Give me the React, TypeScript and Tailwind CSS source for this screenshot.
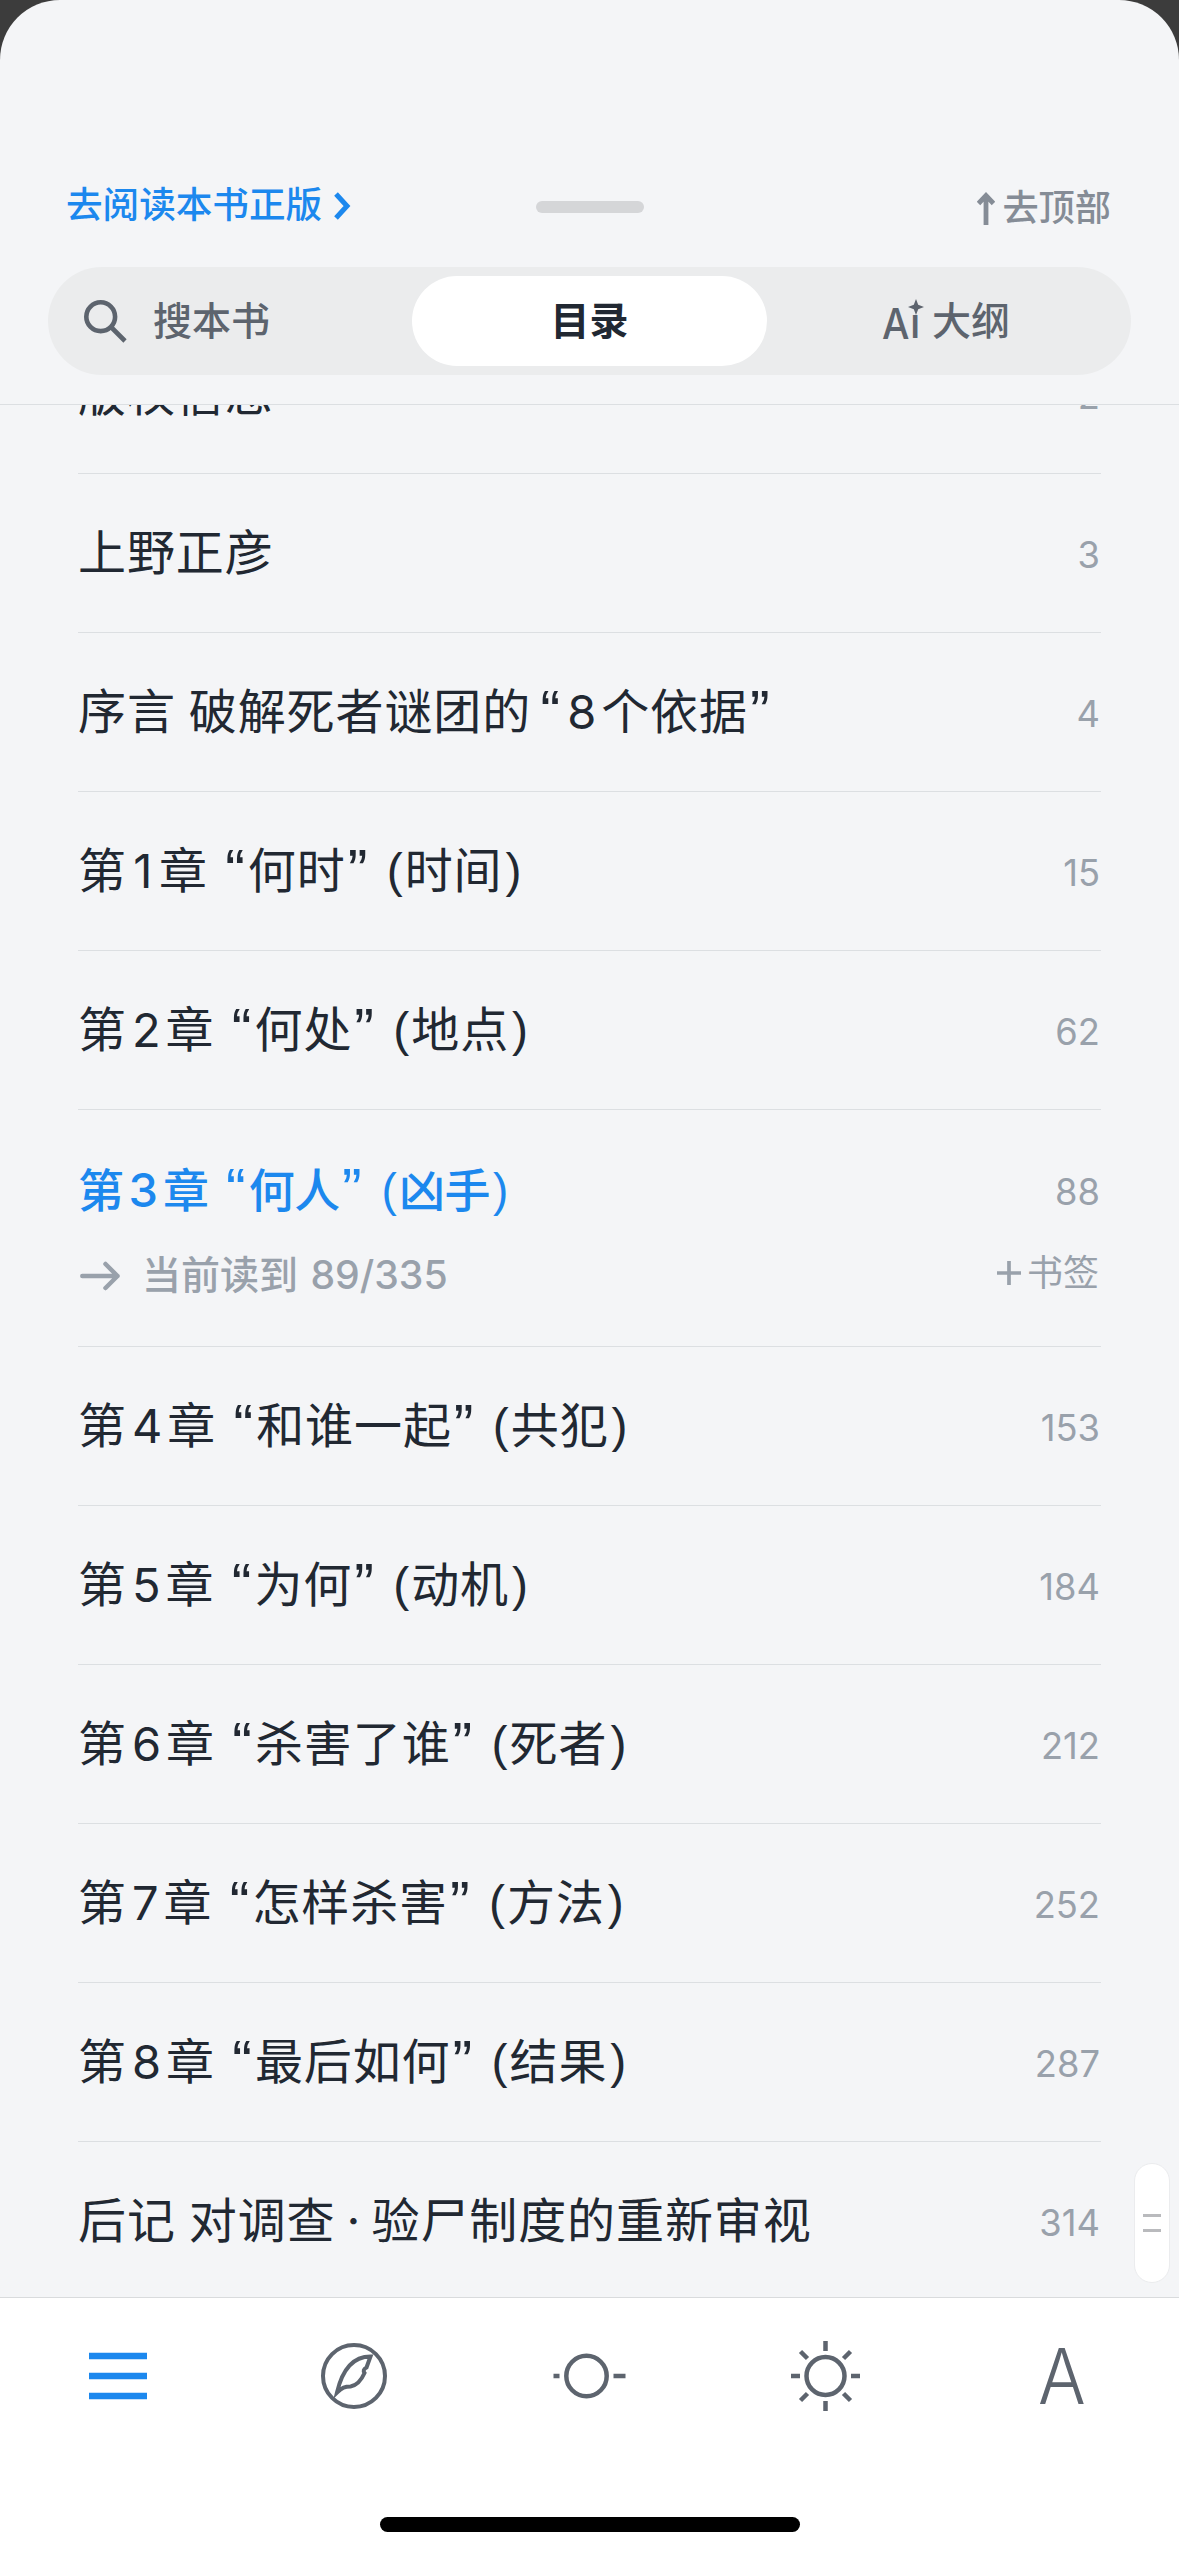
import clsx from 'clsx'

interface Chapter {
  title: string
  page: number
  current?: boolean
}

const chapters: Chapter[] = [
  { title: '版权信息', page: 2 },
  { title: '上野正彦', page: 3 },
  { title: '序言 破解死者谜团的“8个依据”', page: 4 },
  { title: '第1章 “何时”(时间)', page: 15 },
  { title: '第2章 “何处”(地点)', page: 62 },
  { title: '第3章 “何人”(凶手)', page: 88, current: true },
  { title: '第4章 “和谁一起”(共犯)', page: 153 },
  { title: '第5章 “为何”(动机)', page: 184 },
  { title: '第6章 “杀害了谁”(死者)', page: 212 },
  { title: '第7章 “怎样杀害”(方法)', page: 252 },
  { title: '第8章 “最后如何”(结果)', page: 287 },
  { title: '后记 对调查·验尸制度的重新审视', page: 314 },
]

const tokenClasses: Record<string, string> = {
  ' ': 'w-[13px]',
  ' “': "w-[40px] pr-[3px] text-right text-[59px] font-['Liberation_Sans']",
  '“': "w-[31px] pr-[2px] text-right text-[59px] font-['Liberation_Sans']",
  '”': "w-[25px] pl-[2px] text-[59px] font-['Liberation_Sans']",
  '(': "w-[34px] pr-[2px] text-right font-['Liberation_Sans']",
  ')': "w-[22px] pl-[3px] font-['Liberation_Sans']",
  '·': 'w-[36px] text-center',
}

function Title({ text, current }: { text: string; current?: boolean }) {
  const tokens = text.match(/\d+| ?“|[”() ·]|[^\d“”() ·]+/g) ?? []

  return (
    <h2
      className={clsx(
        'flex h-[60px] items-center whitespace-pre leading-[60px]',
        current
          ? 'text-[46px] font-medium tracking-[-0.4px] text-[#1c88ee]'
          : 'text-[48px] tracking-[0.9px] text-[#212832]'
      )}
    >
      {tokens.map((token, i) => {
        if (/\d/.test(token)) {
          return (
            <span key={i} className="min-w-[32px] px-[5px] text-center text-[47px] tracking-normal">
              {token}
            </span>
          )
        }
        return (
          <span
            key={i}
            className={clsx('block h-[60px] shrink-0', tokenClasses[token] && 'tracking-normal', tokenClasses[token])}
          >
            {token}
          </span>
        )
      })}
    </h2>
  )
}

function ChapterRow({ chapter }: { chapter: Chapter }) {
  return (
    <li
      className={clsx(
        'border-b border-[#dcdfe2]',
        chapter.current ? 'h-[237px] pt-[50px]' : 'h-[159px] pt-[49px]'
      )}
    >
      <div className="flex h-[60px] items-center justify-between">
        <Title text={chapter.title} current={chapter.current} />
        <span
          className={clsx(
            'pr-[1px] text-[36.3px] leading-[55px] text-[#99a1ab]',
            chapter.current ? 'pt-[4px]' : 'pt-[5px]'
          )}
        >
          {chapter.page}
        </span>
      </div>
      {chapter.current && (
        <div className="mt-[26px] flex h-[54px] items-center justify-between text-[#99a1ab]">
          <div className="flex items-center pt-[5px]">
            <svg className="ml-[2px] mr-[22px] h-[32px] w-[40px]" viewBox="0 0 40 32" fill="none" stroke="currentColor" strokeWidth="4.5" strokeLinecap="round" strokeLinejoin="round">
              <path d="M2.3 16H37.5M25.5 4l12 12-12 12" />
            </svg>
            <span className="text-[39px] font-medium">
              当前读到 <span className="pl-[2px] text-[39.2px]">89/335</span>
            </span>
          </div>
          <div className="flex items-center gap-[6px] pr-[2px]">
            <svg className="h-6 w-6" viewBox="0 0 24 24" stroke="currentColor" strokeWidth="3.7">
              <path d="M12 0v24M0 12h24" />
            </svg>
            <span className="text-[36px]">书签</span>
          </div>
        </div>
      )}
    </li>
  )
}

function Header() {
  return (
    <header className="flex h-[405px] shrink-0 flex-col border-b border-[#dcdfe2] px-[48px]">
      <div className="mt-[179px] grid h-[56px] grid-cols-[1fr_108px_1fr] items-center px-[18px]">
        <a className="-mt-[3px] flex items-center text-[36.6px] font-medium text-[#1c88ee]">
          去阅读本书正版
          <svg className="ml-[11px] h-[28px] w-[18px]" viewBox="0 0 18 28" fill="none" stroke="currentColor" strokeWidth="5">
            <path d="M3 2l11 12L3 26" />
          </svg>
        </a>
        <div className="h-[12px] rounded-full bg-[#d5d6d8]" />
        <a className="mt-[2px] flex items-center justify-end gap-[7px] pr-[2px] text-[36.2px] font-medium text-[#858c96]">
          <svg className="mt-[1px] h-[33px] w-[18px]" viewBox="0 0 18 33" fill="none" stroke="currentColor" strokeWidth="4.8">
            <path d="M9 33V4M1.5 11.5L9 3.5l7.5 8" />
          </svg>
          去顶部
        </a>
      </div>
      <div className="mt-[32px] grid h-[108px] grid-cols-3 items-center rounded-full bg-[#ebeced] px-[9px] text-[39px] text-[#5d646e]">
        <div className="flex items-center pl-[27px] font-medium">
          <svg className="mr-[26px] h-[43px] w-[43px]" viewBox="0 0 43 43" fill="none" stroke="currentColor" strokeWidth="4.6">
            <circle cx="16.7" cy="16.7" r="14.4" />
            <path d="M27 27l14 14" />
          </svg>
          搜本书
        </div>
        <div className="flex h-[90px] items-center justify-center rounded-full bg-white font-bold text-[#212832]">目录</div>
        <div className="flex items-center justify-center gap-[10px] pl-[3px] font-medium">
          <span className="relative mt-[3px] flex text-[43px] leading-[54px]">
            <span className="w-[28px] origin-left scale-x-90">A</span>
            <span className="w-[12px] text-[41px]">ı</span>
            <svg className="absolute -right-[2px] top-[3px] h-4 w-4" viewBox="0 0 16 16" fill="currentColor">
              <path d="M8 0l2.2 5.8L16 8l-5.8 2.2L8 16l-2.2-5.8L0 8l5.8-2.2z" />
            </svg>
          </span>
          大纲
        </div>
      </div>
    </header>
  )
}

function TabBar() {
  return (
    <nav className="h-[259px] shrink-0 border-t border-[#d9dbdd] bg-white text-[#5d646e]">
      <div className="grid h-[156px] grid-cols-5 place-items-center">
        <svg className="h-20 w-20 text-[#1c88ee]" viewBox="0 0 80 80" stroke="currentColor" strokeWidth="6.3">
          <path d="M11 20h58M11 40h58M11 60h58" />
        </svg>
        <svg className="h-20 w-20" viewBox="0 0 80 80" fill="none" stroke="currentColor" strokeWidth="4">
          <circle cx="40" cy="40" r="31" />
          <path d="M23 56.5C28 35 38 20.5 56.5 20.5L52.5 31.5C49.5 33 49 35 50.5 37C47 45 42 49.5 36.5 50.5C31 50.5 28 51.5 23 56.5Z" />
        </svg>
        <svg className="h-20 w-20" viewBox="0 0 80 80" fill="none" stroke="currentColor" strokeWidth="4.5">
          <circle cx="37.5" cy="40" r="20.2" />
          <path d="M4.5 40h6M64.5 40h12" />
        </svg>
        <svg className="h-20 w-20" viewBox="0 0 80 80" fill="none" stroke="currentColor" strokeWidth="4.5">
          <circle cx="40.5" cy="40" r="19" />
          <path d="M40.5 5v10M40.5 65v10M6 40h9M66 40h9M15.5 15.5l7 7M58.5 57.5l7 7M15.5 64.5l7-7M58.5 22.5l7-7" />
        </svg>
        <span className="scale-x-[0.92] pl-[2px] text-[77px] font-[360] leading-[80px]">A</span>
      </div>
      <div className="mx-auto mt-[63px] h-[15px] w-[420px] rounded-full bg-black" />
    </nav>
  )
}

export default function App() {
  return (
    <div className="h-[2556px] w-[1179px] overflow-hidden bg-[#3c3c3c] font-[Inter,'Noto_Sans_CJK_SC',sans-serif]">
      <div className="flex h-full flex-col overflow-hidden rounded-t-[60px] bg-[#f4f5f7]">
        <Header />
        <main className="relative min-h-0 flex-1 overflow-hidden">
          <ul className="-mt-[90px] px-[78px]">
            {chapters.map((chapter) => (
              <ChapterRow key={chapter.title} chapter={chapter} />
            ))}
          </ul>
          {/* scroll thumb */}
          <div className="absolute bottom-[14px] right-[9px] flex h-[120px] w-[36px] flex-col items-center justify-center gap-[12px] rounded-full border border-[#ebecee] bg-white">
            <div className="h-[3px] w-[18px] bg-[#b9babd]" />
            <div className="h-[3px] w-[18px] bg-[#b9babd]" />
          </div>
        </main>
        <TabBar />
      </div>
    </div>
  )
}
